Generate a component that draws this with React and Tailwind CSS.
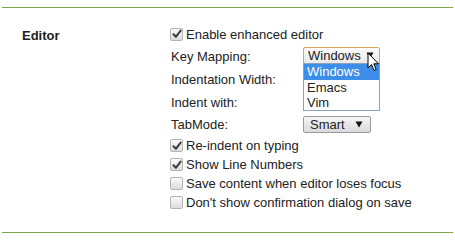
import React from "react";

function Box({ checked }) {
  return (
    <span className="relative inline-flex w-[13px] h-[13px] shrink-0 rounded-[2px] border border-[#b4b4b4] bg-gradient-to-b from-[#fbfbfb] to-[#dcdcdc] items-center justify-center">
      {checked && (
        <svg width="10" height="10" viewBox="0 0 10 10" className="block">
          <path d="M1.5 5.2 L3.9 7.8 L8.6 1.6" fill="none" stroke="#3a3a3a" strokeWidth="2" strokeLinecap="round" strokeLinejoin="round" />
        </svg>
      )}
    </span>
  );
}

function CheckRow({ checked, children }) {
  return (
    <div className="h-[19px] flex items-center gap-[3px]">
      <Box checked={checked} />
      <span>{children}</span>
    </div>
  );
}

function Arrow() {
  return (
    <svg width="8" height="7" viewBox="0 0 8 7" className="block">
      <path d="M0.5 0.5 H7.5 L4 6.5 Z" fill="#111" />
    </svg>
  );
}

export default function App() {
  return (
    <div
      className="relative w-[455px] h-[241px] bg-white text-[13px] leading-none text-[#222] overflow-hidden"
      style={{ fontFamily: '"Liberation Sans", Arial, sans-serif' }}
    >
      <div className="h-[7px]" />
      <div className="mx-[2px] h-px bg-[#79a94c]" />
      <div className="flex pt-[16px]">
        <div className="w-[170px] pl-[22px] pt-[3px] h-[20px] flex items-center font-bold">Editor</div>
        <div className="flex flex-col">
          <div className="h-[20px] flex items-center gap-[3px]">
            <Box checked />
            <span>Enable enhanced editor</span>
          </div>
          <div className="h-[22px] flex items-center">
            <span className="w-[133px] pl-px pt-[2px]">Key Mapping:</span>
            <div className="w-[77px] h-[17px] border border-[#d9a55c] rounded-[2px] bg-gradient-to-b from-[#fbfbfb] to-[#e9e9e9] flex items-center justify-between pl-[4px] pr-[5px]">
              <span className="pt-px">Windows</span>
              <Arrow />
            </div>
          </div>
          <div className="h-[24px] flex items-center">
            <span className="w-[133px] pl-px pt-[2px]">Indentation Width:</span>
          </div>
          <div className="h-[22px] flex items-center">
            <span className="w-[133px] pl-px pt-[2px]">Indent with:</span>
          </div>
          <div className="h-[24px] flex items-center">
            <span className="w-[133px] pl-px">TabMode:</span>
            <div className="w-[68px] h-[17px] border border-[#9a9a9a] rounded-[2px] bg-gradient-to-b from-[#f6f6f6] to-[#dadada] flex items-center justify-between pl-[6px] pr-[7px]">
              <span className="pt-px">Smart</span>
              <Arrow />
            </div>
          </div>
          <CheckRow checked>Re-indent on typing</CheckRow>
          <CheckRow checked>Show Line Numbers</CheckRow>
          <CheckRow>Save content when editor loses focus</CheckRow>
          <CheckRow>Don't show confirmation dialog on save</CheckRow>
        </div>
      </div>
      <div className="h-[20px]" />
      <div className="mx-[2px] h-px bg-[#79a94c]" />

      <div className="absolute left-[303px] top-[63px] w-[77px] h-[48px] border border-[#8aa3bd] bg-white flex flex-col">
        <div className="h-[16px] bg-[#3c8ee8] text-white flex items-center pl-[3px]">Windows</div>
        <div className="h-[16px] flex items-center pl-[3px]">Emacs</div>
        <div className="h-[15px] flex items-center pl-[3px]">Vim</div>
      </div>

      <svg className="absolute left-[367px] top-[52px]" width="13" height="21" viewBox="0 0 13 21">
        <path d="M1 1 L1 16 L4.5 12.5 L7 18.5 L9.2 17.6 L6.8 11.8 L11.5 11.8 Z" fill="#fff" stroke="#000" strokeWidth="1" strokeLinejoin="round" />
      </svg>
    </div>
  );
}
